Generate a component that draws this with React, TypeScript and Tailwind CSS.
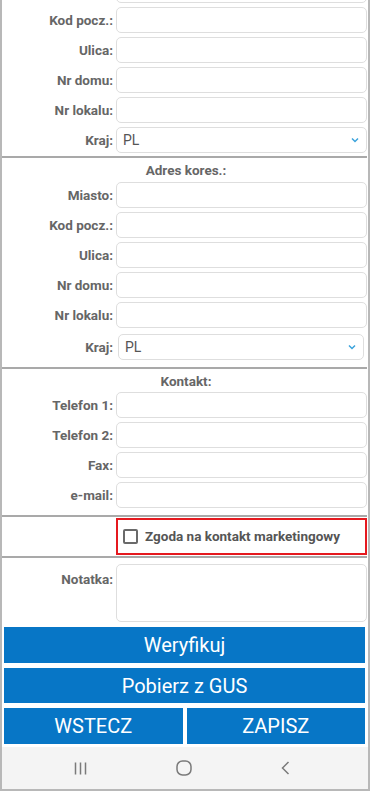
import React from "react";

const font = { fontFamily: "Roboto, 'Liberation Sans', sans-serif" };

function Row({ label, select, inset }: { label: string; select?: boolean; inset?: boolean }) {
    return (
        <div className="flex items-center h-[26px]">
            <div className="w-[114px] pr-[3px] text-right text-[13.5px] font-bold text-[#666]">{label}</div>
            {select ? (
                <div
                    className={
                        inset
                            ? "flex-1 h-[26px] ml-[2px] mr-[3px] border border-[#dedede] rounded-[5px] bg-white flex items-center justify-between pl-[6px] pr-[6px]"
                            : "flex-1 h-[26px] border border-[#dedede] rounded-[5px] bg-white flex items-center justify-between pl-[6px] pr-[6px]"
                    }
                >
                    <span className="text-[14px] text-[#555]">PL</span>
                    <svg width="8" height="6" viewBox="0 0 8 6" className="mr-[1px]">
                        <path d="M1 1.5 L4 4.5 L7 1.5" stroke="#3ba3dc" strokeWidth="1.5" fill="none" />
                    </svg>
                </div>
            ) : (
                <div className="flex-1 h-[26px] border border-[#dedede] rounded-[5px] bg-white" />
            )}
        </div>
    );
}

function Divider() {
    return <div className="h-[2px] bg-[#a9a9a9]" />;
}

function Header({ text }: { text: string }) {
    return (
        <div className="h-[24px] flex items-center justify-center text-[13.5px] font-bold text-[#666] pl-[3px]">
            {text}
        </div>
    );
}

export default function App() {
    return (
        <div className="w-[370px] h-[791px] overflow-hidden bg-white" style={font}>
            <div className="h-full flex flex-col border-x-2 border-b-2 border-[#b8b8b8]">
                <div className="flex-1 overflow-hidden pr-[1px]">
                    {/* scrolled address block, top row partly out of view */}
                    <div className="flex flex-col gap-[4px] -mt-[23px]">
                        <div className="flex h-[26px]">
                            <div className="w-[114px]" />
                            <div className="flex-1 border border-[#dedede] rounded-[5px] bg-white" />
                        </div>
                        <Row label="Kod pocz.:" />
                        <Row label="Ulica:" />
                        <Row label="Nr domu:" />
                        <Row label="Nr lokalu:" />
                        <Row label="Kraj:" select />
                    </div>
                    <div className="mt-[3px]">
                        <Divider />
                    </div>
                    <Header text="Adres kores.:" />
                    <div className="flex flex-col gap-[4px]">
                        <Row label="Miasto:" />
                        <Row label="Kod pocz.:" />
                        <Row label="Ulica:" />
                        <Row label="Nr domu:" />
                        <Row label="Nr lokalu:" />
                        <div className="mt-[2px]">
                            <Row label="Kraj:" select inset />
                        </div>
                    </div>
                    <div className="mt-[7px]">
                        <Divider />
                    </div>
                    <Header text="Kontakt:" />
                    <div className="flex flex-col gap-[4px] mt-[-1px]">
                        <Row label="Telefon 1:" />
                        <Row label="Telefon 2:" />
                        <Row label="Fax:" />
                        <Row label="e-mail:" />
                    </div>
                    <div className="mt-[7px]">
                        <Divider />
                    </div>
                    <div className="flex py-[1px]">
                        <div className="w-[114px]" />
                        <div className="flex-1 h-[37px] border-2 border-[#e5191f] flex items-center pl-[5px]">
                            <div className="w-[15px] h-[15px] border-2 border-[#6a6a6a] rounded-[2px] bg-white" />
                            <span className="ml-[7px] text-[13.5px] font-bold text-[#555]">Zgoda na kontakt marketingowy</span>
                        </div>
                    </div>
                    <Divider />
                    <div className="flex mt-[6px]">
                        <div className="w-[114px] pr-[3px] pt-[5px] text-right text-[13.5px] font-bold text-[#666]">Notatka:</div>
                        <div className="flex-1 h-[58px] border border-[#dedede] rounded-[5px] bg-white" />
                    </div>
                    <div className="flex flex-col gap-[5px] px-[2px] mt-[5px]">
                        <button className="h-[36px] bg-[#0776c6] text-white text-[20px]">Weryfikuj</button>
                        <button className="h-[35px] bg-[#0776c6] text-white text-[20px]">Pobierz z GUS</button>
                        <div className="flex gap-[4px]">
                            <button className="flex-1 h-[36px] bg-[#0776c6] text-white text-[20px]">WSTECZ</button>
                            <button className="flex-1 h-[36px] bg-[#0776c6] text-white text-[20px]">ZAPISZ</button>
                        </div>
                    </div>
                </div>
                <div className="h-[42px] bg-[#f4f4f4] flex items-center justify-center gap-[89px] pr-[6px]">
                    <svg width="13" height="13" viewBox="0 0 13 13">
                        <path d="M1.5 0.5 V12.5 M6.5 0.5 V12.5 M11.5 0.5 V12.5" stroke="#7a7a7a" strokeWidth="1.5" />
                    </svg>
                    <svg width="16" height="16" viewBox="0 0 16 16">
                        <rect x="1" y="1" width="14" height="14" rx="5.5" stroke="#7a7a7a" strokeWidth="1.5" fill="none" />
                    </svg>
                    <svg width="9" height="14" viewBox="0 0 9 14">
                        <path d="M7.5 1 L1.5 7 L7.5 13" stroke="#7a7a7a" strokeWidth="1.5" fill="none" />
                    </svg>
                </div>
            </div>
        </div>
    );
}
